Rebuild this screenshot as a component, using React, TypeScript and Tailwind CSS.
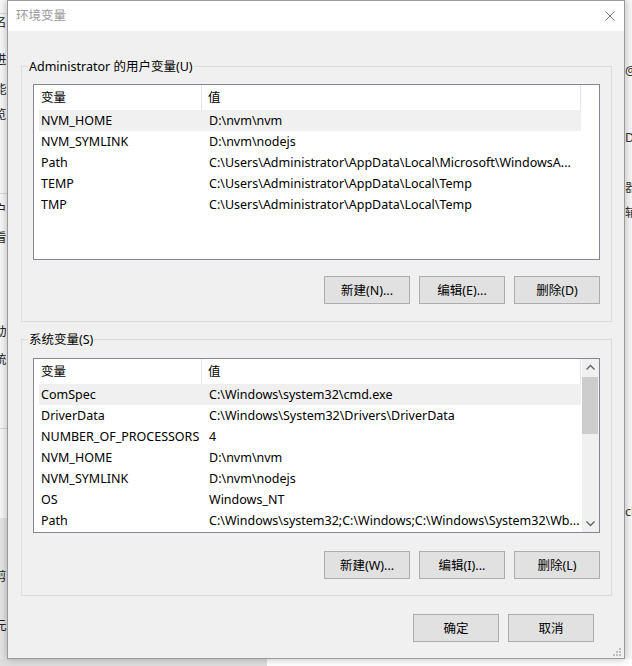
import React from "react";

type Row = { name: string; value: string; selected?: boolean };

const userVars: Row[] = [
  { name: "NVM_HOME", value: "D:\\nvm\\nvm", selected: true },
  { name: "NVM_SYMLINK", value: "D:\\nvm\\nodejs" },
  { name: "Path", value: "C:\\Users\\Administrator\\AppData\\Local\\Microsoft\\WindowsA..." },
  { name: "TEMP", value: "C:\\Users\\Administrator\\AppData\\Local\\Temp" },
  { name: "TMP", value: "C:\\Users\\Administrator\\AppData\\Local\\Temp" },
];

const sysVars: Row[] = [
  { name: "ComSpec", value: "C:\\Windows\\system32\\cmd.exe", selected: true },
  { name: "DriverData", value: "C:\\Windows\\System32\\Drivers\\DriverData" },
  { name: "NUMBER_OF_PROCESSORS", value: "4" },
  { name: "NVM_HOME", value: "D:\\nvm\\nvm" },
  { name: "NVM_SYMLINK", value: "D:\\nvm\\nodejs" },
  { name: "OS", value: "Windows_NT" },
  { name: "Path", value: "C:\\Windows\\system32;C:\\Windows;C:\\Windows\\System32\\Wb..." },
];

function Header() {
  return (
    <div className="flex h-[25px] w-[547px] shrink-0 items-center bg-white">
      <div className="flex h-full w-[168px] items-center border-r border-[#e5e5e5] pl-[7px] pt-[2px]">变量</div>
      <div className="flex h-full flex-1 items-center border-r border-[#e5e5e5] pl-[6px] pt-[2px]">值</div>
    </div>
  );
}

function Rows({ rows }: { rows: Row[] }) {
  return (
    <div className="flex flex-col pl-[5px]">
      {rows.map((r, i) => (
        <div
          key={i}
          className={`flex h-[21px] w-[542px] shrink-0 items-center whitespace-nowrap pt-[2px] ${r.selected ? "bg-[#f0f0f0]" : ""}`}
        >
          <div className="w-[164px] overflow-hidden pl-[2px]">{r.name}</div>
          <div className="flex-1 overflow-hidden pl-[6px]">{r.value}</div>
        </div>
      ))}
    </div>
  );
}

function Btn({ label }: { label: string }) {
  return (
    <div className="flex h-[28px] w-[86px] items-center justify-center border border-[#adadad] bg-[#e1e1e1] pt-[2px]">
      {label}
    </div>
  );
}

function Chevron({ up }: { up: boolean }) {
  return (
    <svg width="17" height="17" viewBox="0 0 17 17">
      <polyline
        points={up ? "4.5,10.5 8.5,6.5 12.5,10.5" : "4.5,6.5 8.5,10.5 12.5,6.5"}
        fill="none"
        stroke="#606060"
        strokeWidth="1.3"
      />
    </svg>
  );
}

function GroupBox({
  label,
  children,
  className,
}: {
  label: string;
  children: React.ReactNode;
  className: string;
}) {
  return (
    <div className={`relative border border-[#dcdcdc] px-[11px] ${className}`}>
      <span className="absolute left-[6px] top-[-8px] bg-[#f0f0f0] px-[1px] leading-[16px]">{label}</span>
      {children}
    </div>
  );
}

export default function App() {
  return (
    <div className="relative h-[666px] w-[632px] overflow-hidden bg-[#f7f7f7] font-['Noto_Sans','Noto_Sans_CJK_SC',sans-serif] text-[12.5px] text-black">
      {/* desktop background behind the dialog */}
      <div className="absolute left-0 top-[13px] h-px w-[8px] bg-[#d8d8d8]" />
      <div className="absolute left-0 top-[193px] h-px w-[8px] bg-[#d8d8d8]" />
      <div className="absolute left-0 top-[428px] h-px w-[8px] bg-[#d8d8d8]" />
      <div className="absolute left-0 top-[518px] h-[148px] w-[8px] bg-[#e4e4e4]" />
      <div className="absolute left-0 top-[659px] h-[7px] w-[267px] bg-[#dedede]" />
      <div className="absolute left-[267px] top-[659px] h-[7px] w-[365px] bg-white" />
      {[
        ["名", 15],
        ["进", 52],
        ["能", 82],
        ["览", 107],
        ["户", 202],
        ["看", 230],
        ["动", 324],
        ["统", 352],
        ["剪", 569],
        ["元", 618],
      ].map(([c, t]) => (
        <span key={c as string} className="absolute left-[-6px] leading-[16px] text-[#222]" style={{ top: t as number }}>
          {c}
        </span>
      ))}
      {[
        ["@", 63],
        ["D", 130],
        ["器", 180],
        ["辅", 205],
        ["cl", 504],
      ].map(([c, t]) => (
        <span key={c as string} className="absolute left-[625px] leading-[16px] text-[#333]" style={{ top: t as number }}>
          {c}
        </span>
      ))}

      {/* dialog window */}
      <div className="absolute left-[7px] top-0 flex h-[659px] w-[618px] flex-col border border-[#9a9a9a] bg-[#f0f0f0] shadow-[0_0_8px_rgba(0,0,0,0.28)]">
        <div className="flex h-[30px] shrink-0 items-center justify-between bg-white pl-[8px] pr-[9px]">
          <span className="pt-[1px] text-[#999]">环境变量</span>
          <svg width="10" height="10" viewBox="0 0 10 10">
            <path d="M0.5 0.5 L9.5 9.5 M9.5 0.5 L0.5 9.5" stroke="#777" strokeWidth="1" />
          </svg>
        </div>

        <div className="flex flex-col pl-[13px] pr-[12px]">
          <GroupBox label="Administrator 的用户变量(U)" className="mt-[35px] h-[256px] pt-[17px]">
            <div className="flex h-[176px] flex-col border border-[#828790] bg-white">
              <Header />
              <Rows rows={userVars} />
            </div>
            <div className="mt-[16px] flex justify-end gap-[9px]">
              <Btn label="新建(N)..." />
              <Btn label="编辑(E)..." />
              <Btn label="删除(D)" />
            </div>
          </GroupBox>

          <GroupBox label="系统变量(S)" className="mt-[17px] h-[257px] pt-[18px]">
            <div className="flex h-[175px] border border-[#828790] bg-white">
              <div className="flex flex-1 flex-col overflow-hidden">
                <Header />
                <Rows rows={sysVars} />
              </div>
              <div className="flex w-[17px] shrink-0 flex-col bg-[#f0f0f0]">
                <Chevron up />
                <div className="mt-px h-[57px] w-[16px] bg-[#cdcdcd]" />
                <div className="flex-1" />
                <Chevron up={false} />
              </div>
            </div>
            <div className="mt-[18px] flex justify-end gap-[9px]">
              <Btn label="新建(W)..." />
              <Btn label="编辑(I)..." />
              <Btn label="删除(L)" />
            </div>
          </GroupBox>
        </div>

        <div className="mt-[18px] flex justify-end gap-[9px] pr-[30px]">
          <Btn label="确定" />
          <Btn label="取消" />
        </div>

        <svg className="absolute bottom-[2px] right-[3px]" width="9" height="9" viewBox="0 0 9 9">
          <rect x="7" y="1" width="2" height="2" fill="#bdbdbd" />
          <rect x="4" y="4" width="2" height="2" fill="#bdbdbd" />
          <rect x="7" y="4" width="2" height="2" fill="#bdbdbd" />
          <rect x="1" y="7" width="2" height="2" fill="#bdbdbd" />
          <rect x="4" y="7" width="2" height="2" fill="#bdbdbd" />
          <rect x="7" y="7" width="2" height="2" fill="#bdbdbd" />
        </svg>
      </div>
    </div>
  );
}
